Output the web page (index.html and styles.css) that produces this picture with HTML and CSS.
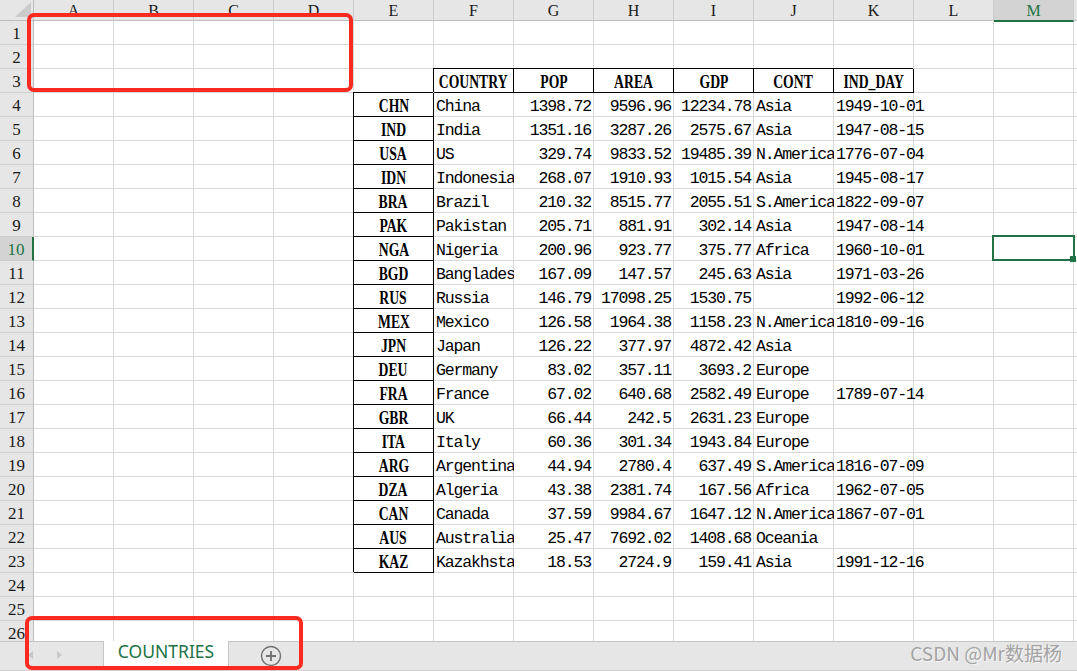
FILE: index.html
```html
<!DOCTYPE html>
<html lang="en">
<head>
<meta charset="utf-8">
<title>COUNTRIES</title>
<link rel="stylesheet" href="styles.css">
</head>
<body>
<div class="app">
  <div class="sheet">
    <div class="colhdr">
      <div class="corner"><svg width="33" height="20" viewBox="0 0 33 20"><polygon points="15,17 31,17 31,2" fill="#cbcbcb"/></svg></div>
      <div>A</div><div>B</div><div>C</div><div>D</div><div>E</div><div>F</div><div>G</div>
      <div>H</div><div>I</div><div>J</div><div>K</div><div>L</div><div class="on">M</div><div>N</div>
    </div>
    <div class="grid">
      <div class="row"><div class="rh">1</div></div>
      <div class="row"><div class="rh">2</div></div>
      <div class="row"><div class="rh">3</div>
        <div class="box cF"><b>COUNTRY</b></div><div class="box cG"><b>POP</b></div><div class="box cH"><b>AREA</b></div>
        <div class="box cI"><b>GDP</b></div><div class="box cJ"><b>CONT</b></div><div class="box cK"><b>IND_DAY</b></div>
      </div>
      <div class="row"><div class="rh">4</div><div class="box cE"><b>CHN</b></div><div class="cell cF">China</div><div class="cell num cG">1398.72</div><div class="cell num cH">9596.96</div><div class="cell num cI">12234.78</div><div class="cell cJ">Asia</div><div class="cell date cK">1949-10-01</div></div>
      <div class="row"><div class="rh">5</div><div class="box cE"><b>IND</b></div><div class="cell cF">India</div><div class="cell num cG">1351.16</div><div class="cell num cH">3287.26</div><div class="cell num cI">2575.67</div><div class="cell cJ">Asia</div><div class="cell date cK">1947-08-15</div></div>
      <div class="row"><div class="rh">6</div><div class="box cE"><b>USA</b></div><div class="cell cF">US</div><div class="cell num cG">329.74</div><div class="cell num cH">9833.52</div><div class="cell num cI">19485.39</div><div class="cell cJ">N.America</div><div class="cell date cK">1776-07-04</div></div>
      <div class="row"><div class="rh">7</div><div class="box cE"><b>IDN</b></div><div class="cell cF">Indonesia</div><div class="cell num cG">268.07</div><div class="cell num cH">1910.93</div><div class="cell num cI">1015.54</div><div class="cell cJ">Asia</div><div class="cell date cK">1945-08-17</div></div>
      <div class="row"><div class="rh">8</div><div class="box cE"><b>BRA</b></div><div class="cell cF">Brazil</div><div class="cell num cG">210.32</div><div class="cell num cH">8515.77</div><div class="cell num cI">2055.51</div><div class="cell cJ">S.America</div><div class="cell date cK">1822-09-07</div></div>
      <div class="row"><div class="rh">9</div><div class="box cE"><b>PAK</b></div><div class="cell cF">Pakistan</div><div class="cell num cG">205.71</div><div class="cell num cH">881.91</div><div class="cell num cI">302.14</div><div class="cell cJ">Asia</div><div class="cell date cK">1947-08-14</div></div>
      <div class="row"><div class="rh on">10</div><div class="box cE"><b>NGA</b></div><div class="cell cF">Nigeria</div><div class="cell num cG">200.96</div><div class="cell num cH">923.77</div><div class="cell num cI">375.77</div><div class="cell cJ">Africa</div><div class="cell date cK">1960-10-01</div></div>
      <div class="row"><div class="rh">11</div><div class="box cE"><b>BGD</b></div><div class="cell cF">Bangladesh</div><div class="cell num cG">167.09</div><div class="cell num cH">147.57</div><div class="cell num cI">245.63</div><div class="cell cJ">Asia</div><div class="cell date cK">1971-03-26</div></div>
      <div class="row"><div class="rh">12</div><div class="box cE"><b>RUS</b></div><div class="cell cF">Russia</div><div class="cell num cG">146.79</div><div class="cell num cH">17098.25</div><div class="cell num cI">1530.75</div><div class="cell date cK">1992-06-12</div></div>
      <div class="row"><div class="rh">13</div><div class="box cE"><b>MEX</b></div><div class="cell cF">Mexico</div><div class="cell num cG">126.58</div><div class="cell num cH">1964.38</div><div class="cell num cI">1158.23</div><div class="cell cJ">N.America</div><div class="cell date cK">1810-09-16</div></div>
      <div class="row"><div class="rh">14</div><div class="box cE"><b>JPN</b></div><div class="cell cF">Japan</div><div class="cell num cG">126.22</div><div class="cell num cH">377.97</div><div class="cell num cI">4872.42</div><div class="cell cJ">Asia</div></div>
      <div class="row"><div class="rh">15</div><div class="box cE"><b>DEU</b></div><div class="cell cF">Germany</div><div class="cell num cG">83.02</div><div class="cell num cH">357.11</div><div class="cell num cI">3693.2</div><div class="cell cJ">Europe</div></div>
      <div class="row"><div class="rh">16</div><div class="box cE"><b>FRA</b></div><div class="cell cF">France</div><div class="cell num cG">67.02</div><div class="cell num cH">640.68</div><div class="cell num cI">2582.49</div><div class="cell cJ">Europe</div><div class="cell date cK">1789-07-14</div></div>
      <div class="row"><div class="rh">17</div><div class="box cE"><b>GBR</b></div><div class="cell cF">UK</div><div class="cell num cG">66.44</div><div class="cell num cH">242.5</div><div class="cell num cI">2631.23</div><div class="cell cJ">Europe</div></div>
      <div class="row"><div class="rh">18</div><div class="box cE"><b>ITA</b></div><div class="cell cF">Italy</div><div class="cell num cG">60.36</div><div class="cell num cH">301.34</div><div class="cell num cI">1943.84</div><div class="cell cJ">Europe</div></div>
      <div class="row"><div class="rh">19</div><div class="box cE"><b>ARG</b></div><div class="cell cF">Argentina</div><div class="cell num cG">44.94</div><div class="cell num cH">2780.4</div><div class="cell num cI">637.49</div><div class="cell cJ">S.America</div><div class="cell date cK">1816-07-09</div></div>
      <div class="row"><div class="rh">20</div><div class="box cE"><b>DZA</b></div><div class="cell cF">Algeria</div><div class="cell num cG">43.38</div><div class="cell num cH">2381.74</div><div class="cell num cI">167.56</div><div class="cell cJ">Africa</div><div class="cell date cK">1962-07-05</div></div>
      <div class="row"><div class="rh">21</div><div class="box cE"><b>CAN</b></div><div class="cell cF">Canada</div><div class="cell num cG">37.59</div><div class="cell num cH">9984.67</div><div class="cell num cI">1647.12</div><div class="cell cJ">N.America</div><div class="cell date cK">1867-07-01</div></div>
      <div class="row"><div class="rh">22</div><div class="box cE"><b>AUS</b></div><div class="cell cF">Australia</div><div class="cell num cG">25.47</div><div class="cell num cH">7692.02</div><div class="cell num cI">1408.68</div><div class="cell cJ">Oceania</div></div>
      <div class="row"><div class="rh">23</div><div class="box cE"><b>KAZ</b></div><div class="cell cF">Kazakhstan</div><div class="cell num cG">18.53</div><div class="cell num cH">2724.9</div><div class="cell num cI">159.41</div><div class="cell cJ">Asia</div><div class="cell date cK">1991-12-16</div></div>
      <div class="row"><div class="rh">24</div></div>
      <div class="row"><div class="rh">25</div></div>
      <div class="row"><div class="rh">26</div></div>
    </div>
  </div>
  <div class="tabbar">
    <div class="nav"><svg width="103" height="28" viewBox="0 0 103 28"><polygon points="33,9 33,17 28,13" fill="#c8c8c8"/><polygon points="57,9 57,17 62,13" fill="#c8c8c8"/></svg></div>
    <div class="tab"><span>COUNTRIES</span></div>
    <div class="add"><svg width="22" height="22" viewBox="0 0 22 22"><circle cx="11" cy="11" r="9.5" fill="none" stroke="#707070" stroke-width="1.4"/><path d="M6 11h10M11 6v10" stroke="#707070" stroke-width="1.8"/></svg></div>
    <div class="mark">CSDN @Mr数据杨</div>
  </div>
  <div class="sel"></div>
  <div class="hl hl1"></div>
  <div class="hl hl2"></div>
</div>
</body>
</html>
```

FILE: styles.css
```css
* { box-sizing: border-box; }
html, body { margin: 0; padding: 0; background: #fff; overflow: hidden; }

.app {
  position: relative;
  width: 1077px;
  height: 671px;
  overflow: hidden;
  display: flex;
  flex-direction: column;
  font-family: "Liberation Mono", monospace;
}

.sheet { height: 641px; flex: none; overflow: hidden; }

.colhdr {
  display: grid;
  grid-template-columns: 34px repeat(14, 80px);
  height: 21px;
  background: #e6e6e6;
  border-bottom: 1px solid #bdbdbd;
}
.colhdr > div {
  border-right: 1px solid #cdcdcd;
  font: 16px/19px "Liberation Serif", serif;
  padding-top: 1px;
  text-align: center;
  color: #1a1a1a;
}
.colhdr > .corner { border-right-color: #bdbdbd; padding: 0; }
.corner svg { display: block; }
.colhdr > .on {
  background: #d3d3d3;
  border-bottom: 2px solid #217346;
  color: #217346;
}

.grid {
  height: 620px;
  background:
    repeating-linear-gradient(to right, transparent 0 79px, #d9d9d9 79px 80px) 34px 0,
    repeating-linear-gradient(to bottom, transparent 0 23px, #d9d9d9 23px 24px) 0 0,
    #fff;
}

.row {
  display: grid;
  grid-template-columns: 34px repeat(14, 80px);
  height: 24px;
}
.row > * { grid-row: 1; }

.rh {
  grid-column: 1;
  background: #e6e6e6;
  border-right: 1px solid #bdbdbd;
  border-bottom: 1px solid #cfcfcf;
  font: 17px/18px "Liberation Serif", serif;
  padding-top: 4px;
  text-align: center;
  color: #1a1a1a;
}
.rh.on {
  background: #d3d3d3;
  border-right: 2px solid #217346;
  color: #217346;
}

.cell {
  height: 24px;
  padding: 5px 2px 0;
  font-size: 16.5px;
  line-height: 18px;
  letter-spacing: -1.15px;
  white-space: nowrap;
  overflow: hidden;
  color: #000;
}
.num { text-align: right; padding-right: 3px; }
.date { overflow: visible; }

.box {
  height: 24px;
  display: flex;
  justify-content: center;
  padding-top: 4px;
  border-right: 1px solid #000;
  border-bottom: 1px solid #000;
  box-shadow: -1px -1px 0 #000;
  font: bold 18px/18px "Liberation Serif", serif;
  color: #000;
}
.box b {
  display: block;
  white-space: nowrap;
  transform: scaleX(0.76);
}

.cE { grid-column: 6; }
.cF { grid-column: 7; }
.cG { grid-column: 8; }
.cH { grid-column: 9; }
.cI { grid-column: 10; }
.cJ { grid-column: 11; }
.cK { grid-column: 12; }

.tabbar {
  height: 30px;
  flex: none;
  display: flex;
  align-items: center;
  background: #e6e6e6;
  border-top: 1px solid #c6c6c6;
  border-bottom: 1px solid #d0d0d0;
  font-family: "Noto Sans", sans-serif;
}
.nav { width: 103px; align-self: stretch; }
.nav svg { display: block; }
.tab {
  width: 126px;
  align-self: stretch;
  margin-top: -1px;
  background: #fff;
  border-left: 1px solid #c6c6c6;
  border-right: 1px solid #c6c6c6;
  display: flex;
  align-items: center;
  justify-content: center;
  padding-bottom: 9px;
  color: #217346;
  font-size: 17.5px;
  line-height: 18px;
}
.add { margin-left: 31px; height: 22px; }
.add svg { display: block; }
.mark {
  margin-left: auto;
  margin-right: 15px;
  padding-bottom: 7px;
  font: 19px/20px "Noto Sans CJK SC", "Noto Sans", sans-serif;
  color: #a3a3a3;
  text-shadow: 1px 1px 0 #f6f6f6;
}

.sel {
  position: absolute;
  left: 992px;
  top: 235px;
  width: 83px;
  height: 26px;
  border: 2px solid #217346;
}
.sel::after {
  content: "";
  position: absolute;
  right: -3px;
  bottom: -3px;
  width: 6px;
  height: 6px;
  background: #217346;
}

.hl {
  position: absolute;
  border: 4px solid #fb2a20;
  border-radius: 7px;
}
.hl1 { left: 27px; top: 13px; width: 326px; height: 79px; }
.hl2 { left: 25px; top: 616px; width: 278px; height: 54px; }
```
